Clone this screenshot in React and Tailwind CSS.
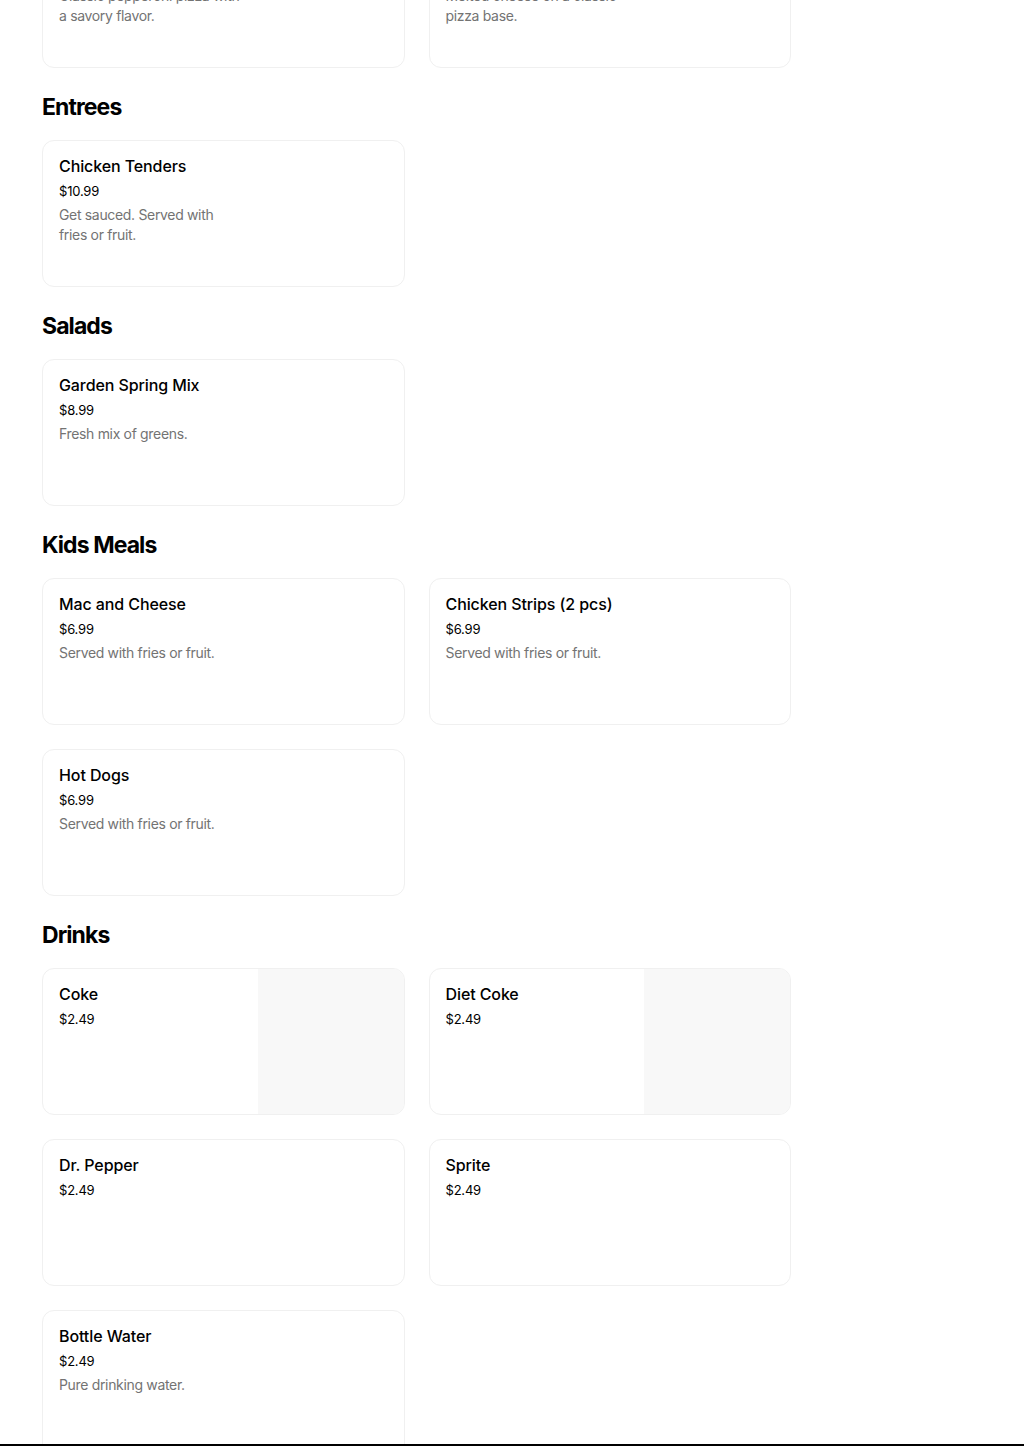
import React from 'react';

const sections = [
  {
    title: 'Pizza',
    hidden: true,
    items: [
      { name: 'Pepperoni Pizza', price: '$12.99', desc: 'Classic pepperoni pizza with a savory flavor.' },
      { name: 'Cheese Pizza', price: '$11.99', desc: 'Melted cheese on a classic pizza base.' },
    ],
  },
  {
    title: 'Entrees',
    items: [
      { name: 'Chicken Tenders', price: '$10.99', desc: 'Get sauced. Served with fries or fruit.' },
    ],
  },
  {
    title: 'Salads',
    items: [
      { name: 'Garden Spring Mix', price: '$8.99', desc: 'Fresh mix of greens.' },
    ],
  },
  {
    title: 'Kids Meals',
    items: [
      { name: 'Mac and Cheese', price: '$6.99', desc: 'Served with fries or fruit.' },
      { name: 'Chicken Strips (2 pcs)', price: '$6.99', desc: 'Served with fries or fruit.' },
      { name: 'Hot Dogs', price: '$6.99', desc: 'Served with fries or fruit.' },
    ],
  },
  {
    title: 'Drinks',
    items: [
      { name: 'Coke', price: '$2.49', image: true },
      { name: 'Diet Coke', price: '$2.49', image: true },
      { name: 'Dr. Pepper', price: '$2.49' },
      { name: 'Sprite', price: '$2.49' },
      { name: 'Bottle Water', price: '$2.49', desc: 'Pure drinking water.' },
    ],
  },
];

const MenuCard = ({ item }) => (
  <div className="flex h-[147px] overflow-hidden rounded-xl border border-[#f0f0f0] bg-white">
    <div className="flex-1 p-4">
      <div className="text-[16px] font-medium leading-[18px] tracking-[-0.1px] text-black">{item.name}</div>
      <div className="mt-[6px] text-[13px] leading-5 tracking-[-0.2px] text-black">{item.price}</div>
      {item.desc && (
        <p className="mt-1 max-w-[185px] text-[14px] leading-5 tracking-[-0.33px] text-[#737373]">{item.desc}</p>
      )}
    </div>
    {item.image && <div className="w-[146px] bg-[#f8f8f8]" />}
  </div>
);

const App = () => {
  return (
    <div className="min-h-screen overflow-hidden bg-white font-['Inter',sans-serif]">
      <div className="w-[791px] pl-[42px]">
        {sections.map((section) => (
          <section key={section.title}>
            {section.hidden ? null : (
              <h2 className="mt-6 mb-[18px] text-[23px] font-bold leading-[30px] tracking-[-0.04em] text-black">
                {section.title}
              </h2>
            )}
            <div className={`grid grid-cols-2 gap-6 ${section.hidden ? '-mt-[79px]' : ''}`}>
              {section.items.map((item) => (
                <MenuCard key={item.name} item={item} />
              ))}
            </div>
          </section>
        ))}
      </div>
      <div className="fixed bottom-0 left-0 h-[2px] w-full bg-black" />
    </div>
  );
};

export default App;
